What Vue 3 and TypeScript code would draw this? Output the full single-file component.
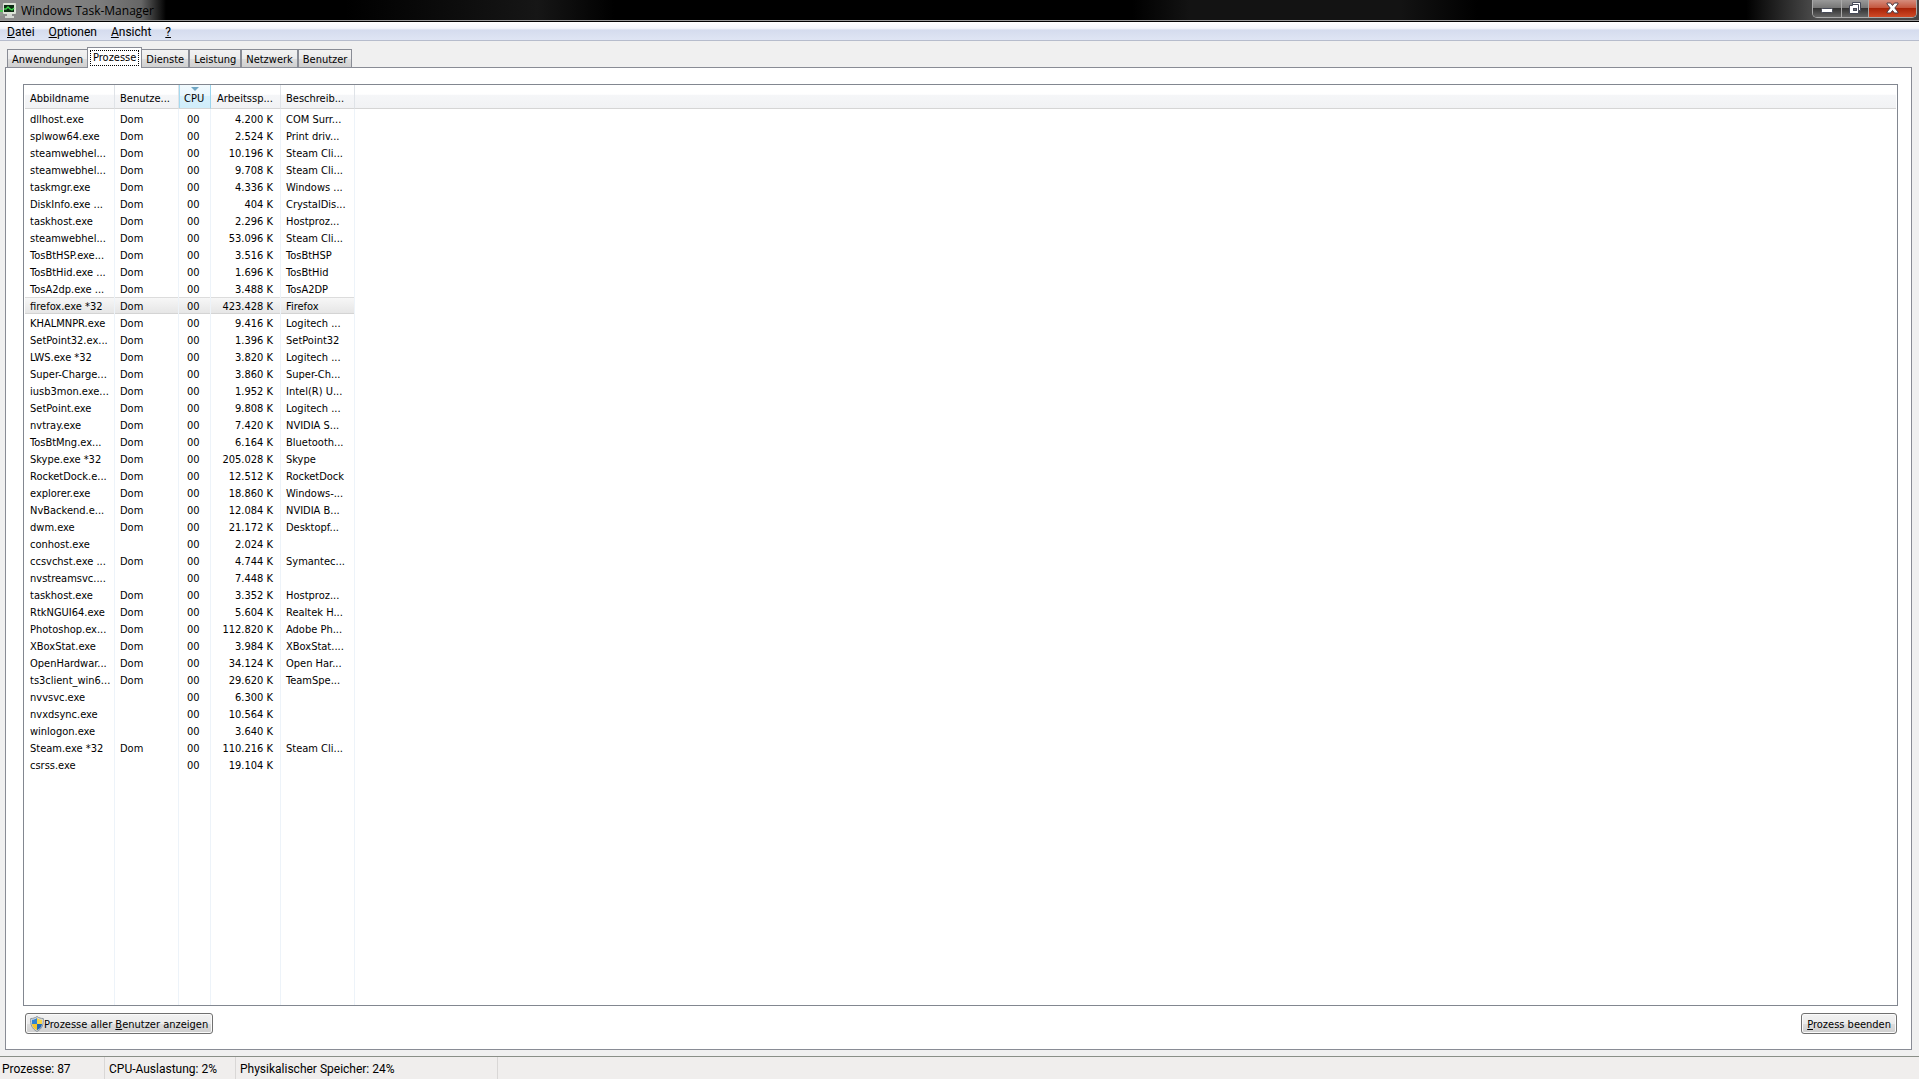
<script setup lang="ts">
import { ref } from 'vue'

interface Proc {
  name: string
  user: string
  mem: string
  desc: string
}

const menus: [string, string][] = [['D', 'atei'], ['O', 'ptionen'], ['A', 'nsicht'], ['?', '']]
const tabs: string[] = ['Anwendungen', 'Prozesse', 'Dienste', 'Leistung', 'Netzwerk', 'Benutzer']
const activeTab = ref('Prozesse')
const selected = ref(11)

const raw = `dllhost.exe|Dom|4.200|COM Surr...
splwow64.exe|Dom|2.524|Print driv...
steamwebhel...|Dom|10.196|Steam Cli...
steamwebhel...|Dom|9.708|Steam Cli...
taskmgr.exe|Dom|4.336|Windows ...
DiskInfo.exe ...|Dom|404|CrystalDis...
taskhost.exe|Dom|2.296|Hostproz...
steamwebhel...|Dom|53.096|Steam Cli...
TosBtHSP.exe...|Dom|3.516|TosBtHSP
TosBtHid.exe ...|Dom|1.696|TosBtHid
TosA2dp.exe ...|Dom|3.488|TosA2DP
firefox.exe *32|Dom|423.428|Firefox
KHALMNPR.exe|Dom|9.416|Logitech ...
SetPoint32.ex...|Dom|1.396|SetPoint32
LWS.exe *32|Dom|3.820|Logitech ...
Super-Charge...|Dom|3.860|Super-Ch...
iusb3mon.exe...|Dom|1.952|Intel(R) U...
SetPoint.exe|Dom|9.808|Logitech ...
nvtray.exe|Dom|7.420|NVIDIA S...
TosBtMng.ex...|Dom|6.164|Bluetooth...
Skype.exe *32|Dom|205.028|Skype
RocketDock.e...|Dom|12.512|RocketDock
explorer.exe|Dom|18.860|Windows-...
NvBackend.e...|Dom|12.084|NVIDIA B...
dwm.exe|Dom|21.172|Desktopf...
conhost.exe||2.024|
ccsvchst.exe ...|Dom|4.744|Symantec...
nvstreamsvc....||7.448|
taskhost.exe|Dom|3.352|Hostproz...
RtkNGUI64.exe|Dom|5.604|Realtek H...
Photoshop.ex...|Dom|112.820|Adobe Ph...
XBoxStat.exe|Dom|3.984|XBoxStat....
OpenHardwar...|Dom|34.124|Open Har...
ts3client_win6...|Dom|29.620|TeamSpe...
nvvsvc.exe||6.300|
nvxdsync.exe||10.564|
winlogon.exe||3.640|
Steam.exe *32|Dom|110.216|Steam Cli...
csrss.exe||19.104|`

const procs: Proc[] = raw.split('\n').map((line) => {
  const [name, user, mem, desc] = line.split('|')
  return { name, user, mem, desc }
})
</script>

<template>
  <div class="window">
    <header class="titlebar">
      <div class="caption">
        <svg class="app-icon" width="16" height="16" viewBox="0 0 16 16" aria-hidden="true">
          <rect x="3" y="1" width="13" height="11" rx="1" fill="#dbe2d6" />
          <rect x="4" y="3" width="10" height="7" fill="#0b2a12" />
          <path d="M4 7 L6 7 L8 5 L10 7 L12 8 L14 6" fill="none" stroke="#3fd64c" stroke-width="1.4" />
          <path d="M7 12h5v2h2v2H5v-2h2z" fill="#d3d7d2" />
          <path d="M0 6h3v8H0z" fill="#8f978f" />
          <path d="M0 8h3v2H0z" fill="#4ec655" />
        </svg>
        <h1 class="title">Windows Task-Manager</h1>
      </div>
      <div class="controls">
        <button class="ctl min" type="button" aria-label="Minimieren">
          <svg width="12" height="12" viewBox="0 0 12 12"><rect x=".5" y="6.500" width="11" height="4" rx="1" fill="#fff" stroke="#464a58" /></svg>
        </button>
        <button class="ctl max" type="button" aria-label="Verkleinern">
          <svg width="12" height="12" viewBox="0 0 12 12">
            <path d="M3.500 .5h8v8h-2v3h-9v-8h3z" fill="#fff" stroke="#464a58" />
            <path d="M3.500 2.500h6v6" fill="none" stroke="#464a58" />
            <rect x="4.500" y="6.500" width="3" height="2" fill="#777" stroke="#464a58" />
          </svg>
        </button>
        <button class="ctl close" type="button" aria-label="Schließen">
          <svg width="13" height="12" viewBox="0 0 13 12"><path d="M1 1h3.500l2 2.500L8.500 1H12v1L8.800 6 12 10v1H8.500l-2-2.500L4.500 11H1v-1l3.200-4L1 2z" fill="#fff" stroke="#4c3b44" /></svg>
        </button>
      </div>
    </header>

    <nav class="menubar">
      <button v-for="m in menus" :key="m[0]" class="menu" type="button"><u>{{ m[0] }}</u>{{ m[1] }}</button>
    </nav>

    <main class="body">
      <div class="tabs" role="tablist">
        <button
          v-for="t in tabs"
          :key="t"
          class="tab"
          :class="{ active: t === activeTab }"
          type="button"
          role="tab"
          :aria-selected="t === activeTab"
          @click="activeTab = t"
        ><span class="tab-label">{{ t }}</span></button>
      </div>

      <section class="page">
        <div class="list">
          <table class="grid">
            <colgroup>
              <col class="c-name" /><col class="c-user" /><col class="c-cpu" /><col class="c-mem" /><col class="c-desc" /><col />
            </colgroup>
            <thead>
              <tr>
                <th>Abbildname</th>
                <th>Benutze...</th>
                <th class="sorted" aria-sort="descending">CPU</th>
                <th class="mem-head">Arbeitssp...</th>
                <th>Beschreib...</th>
                <td class="rest"></td>
              </tr>
            </thead>
            <tbody>
              <tr class="gap"><td></td><td></td><td></td><td></td><td></td><td></td></tr>
              <tr v-for="(p, i) in procs" :key="i" class="row" :class="{ selected: i === selected }" @click="selected = i">
                <td>{{ p.name }}</td>
                <td>{{ p.user }}</td>
                <td class="cpu">00</td>
                <td class="mem">{{ p.mem }} K</td>
                <td>{{ p.desc }}</td>
                <td></td>
              </tr>
              <tr class="fill"><td></td><td></td><td></td><td></td><td></td><td></td></tr>
            </tbody>
          </table>
        </div>
        <div class="actions">
          <button class="btn all-users" type="button">
            <svg width="14" height="16" viewBox="0 0 14 16" aria-hidden="true">
              <path d="M7 .5C5 2 3 2.500 .7 2.500 .3 8 1.500 12.500 7 15.500 12.500 12.500 13.700 8 13.300 2.500 11 2.500 9 2 7 .5z" fill="#d9dde0" stroke="#8b9399" />
              <path d="M7 2C5.500 3.200 4 3.700 2 3.800V8h5z" fill="#2f83d3" />
              <path d="M7 2c1.500 1.200 3 1.700 5 1.800V8H7z" fill="#f8d648" />
              <path d="M2 8c.4 2.800 2 4.800 5 6.300V8z" fill="#f3c52e" />
              <path d="M12 8c-.4 2.800-2 4.800-5 6.300V8z" fill="#2268b8" />
            </svg>
            <span>Prozesse aller <u>B</u>enutzer anzeigen</span>
          </button>
          <button class="btn end" type="button"><span><u>P</u>rozess beenden</span></button>
        </div>
      </section>
    </main>

    <footer class="status">
      <span class="cell s-count">Prozesse: 87</span>
      <span class="cell s-cpu">CPU-Auslastung: 2%</span>
      <span class="cell s-mem">Physikalischer Speicher: 24%</span>
    </footer>
  </div>
</template>

<style>
body {
  margin: 0;
}
</style>

<style scoped>
.window {
  display: flex;
  flex-direction: column;
  height: 100vh;
  overflow: hidden;
  box-sizing: border-box;
  background: #f0f0f0;
  color: #000;
  font-family: "DejaVu Sans Condensed", Tahoma, sans-serif;
  font-size: 11px;
  line-height: 17px;
}
button {
  margin: 0;
  color: inherit;
  font: inherit;
  white-space: nowrap;
}
.titlebar {
  display: flex;
  justify-content: space-between;
  flex: none;
  height: 22px;
  box-sizing: border-box;
  border-bottom: 1px solid #000;
  box-shadow: inset 0 -1px #999;
  background: linear-gradient(90deg, #000 0, #000 18%, #161616 28%, #000 32%, #000 59%, #131313 62%, #131313 73%, #000 77%, #000 91%, #555 95%, #444);
}
.caption {
  display: flex;
  align-items: center;
  gap: 5px;
  height: 20px;
  padding-right: 12px;
  background: linear-gradient(90deg, #8c8c8c 0, #7c7c7c 60%, #666 85%, transparent);
}
.title {
  margin: 0;
  font-family: "Open Sans", "Segoe UI", sans-serif;
  font-size: 12px;
  font-weight: 400;
}
.controls {
  display: flex;
  height: 18px;
  margin-right: 2px;
  box-sizing: border-box;
  border: 1px solid #aaa;
  border-top: 0;
  border-radius: 0 0 5px 5px;
  overflow: hidden;
}
.ctl {
  display: flex;
  align-items: center;
  justify-content: center;
  padding: 0 0 2px;
  border: 0;
  border-right: 1px solid #aaa;
  background: linear-gradient(#999 0, #777 45%, #333 50%, #666);
}
.min {
  width: 29px;
}
.max {
  width: 27px;
}
.close {
  width: 47px;
  border-right: 0;
  background: linear-gradient(#d58c7c 0, #c5573f 45%, #a92308 50%, #cf4a26);
}
.menubar {
  display: flex;
  gap: 14px;
  flex: none;
  height: 19px;
  padding-left: 7px;
  box-sizing: border-box;
  border-bottom: 1px solid #b6bccc;
  background: linear-gradient(#fff 0, #f4f6fb 35%, #d5dcee 45%, #dfe5f4);
}
.menu {
  padding: 2px 0 0;
  border: 0;
  background: none;
  font-family: Roboto, "Segoe UI", sans-serif;
  font-size: 12px;
  line-height: 16px;
}
.body {
  display: flex;
  flex-direction: column;
  flex: 1;
  min-height: 0;
  padding: 6px 7px 6px 5px;
}
.tabs {
  display: flex;
  align-items: flex-end;
  height: 20px;
  padding-left: 2px;
}
.tab {
  height: 18px;
  padding: 1px 4px 0;
  border: 1px solid #898c95;
  border-bottom: 0;
  box-sizing: border-box;
  background: linear-gradient(#f2f2f2, #ebebeb 50%, #dcdcdc 55%, #d0d0d0);
  line-height: 17px;
}
.tab.active {
  position: relative;
  height: 21px;
  margin: 0 -1px -1px;
  padding: 0 2px;
  background: #fff;
}
.tab.active .tab-label {
  display: block;
  padding: 0 2px;
  border: 1px dotted #000;
  line-height: 14px;
}
.page {
  display: flex;
  flex-direction: column;
  flex: 1;
  min-height: 0;
  padding: 16px 13px 15px 17px;
  border: 1px solid #898c95;
  background: #fff;
}
.list {
  flex: 1;
  min-height: 0;
  padding: 0 1px;
  border: 1px solid #828790;
}
.grid {
  width: 100%;
  height: 100%;
  table-layout: fixed;
  border-collapse: separate;
  border-spacing: 0;
}
.c-name {
  width: 90px;
}
.c-user {
  width: 64px;
}
.c-cpu {
  width: 32px;
}
.c-mem {
  width: 70px;
}
.c-desc {
  width: 74px;
}
.grid th,
.grid td {
  padding: 0 0 0 5px;
  border-right: 1px solid #edf3f9;
  text-align: left;
  font-weight: 400;
  white-space: nowrap;
}
.grid td:last-child {
  border-right: 0;
}
.grid th,
.grid .rest {
  height: 24px;
  padding-top: 4px;
  box-sizing: border-box;
  border-right-color: #dfe3e8;
  border-bottom: 1px solid #d5d5d5;
  background: linear-gradient(#fff 0, #fff 40%, #f5f6f8 45%, #f1f2f4);
}
.grid .mem-head {
  padding-left: 6px;
}
.grid .sorted {
  position: relative;
  border-right-color: #9bd5ee;
  background: linear-gradient(#f2fafe 0, #e8f6fd 45%, #d6effb 50%, #d0edfa);
  box-shadow: inset 1px 0 #a5daf0;
}
.sorted::before {
  content: "";
  position: absolute;
  top: 2px;
  left: 12px;
  border: 4px solid transparent;
  border-top-color: #6fa6c4;
  border-bottom: 0;
}
.gap td {
  height: 1px;
}
.grid .row td {
  height: 17px;
  padding-top: 2px;
  box-sizing: border-box;
  line-height: 15px;
}
.grid .row .cpu {
  padding-left: 8px;
}
.grid .row .mem {
  padding-left: 0;
  padding-right: 7px;
  text-align: right;
}
.selected td:not(:last-child) {
  background: linear-gradient(#f8f8f8, #e5e5e5);
  box-shadow: inset 0 1px #dcdcdc, inset 0 -1px #d4d4d4;
}
.fill td {
  height: auto;
}
.actions {
  display: flex;
  justify-content: space-between;
  flex: none;
  padding: 7px 1px 0 2px;
}
.btn {
  display: flex;
  align-items: center;
  height: 21px;
  padding: 1px 4px 0;
  box-sizing: border-box;
  border: 1px solid #707070;
  border-radius: 3px;
  background: linear-gradient(#f2f2f2, #ebebeb 50%, #dddddd 52%, #cfcfcf);
  box-shadow: inset 0 0 0 1px #fafafa;
}
.end {
  padding: 1px 5px 0;
}
.status {
  display: flex;
  flex: none;
  height: 23px;
  box-sizing: border-box;
  border-top: 1px solid #8a8f88;
  background: #f0eeed;
  font-family: Roboto, "Segoe UI", sans-serif;
  font-size: 12px;
  line-height: 24px;
}
.cell {
  padding-left: 4px;
  box-sizing: border-box;
  border-right: 1px solid #d9d7d6;
  white-space: nowrap;
}
.s-count {
  width: 105px;
  padding-left: 2px;
}
.s-cpu {
  width: 131px;
}
.s-mem {
  width: 262px;
}
</style>
